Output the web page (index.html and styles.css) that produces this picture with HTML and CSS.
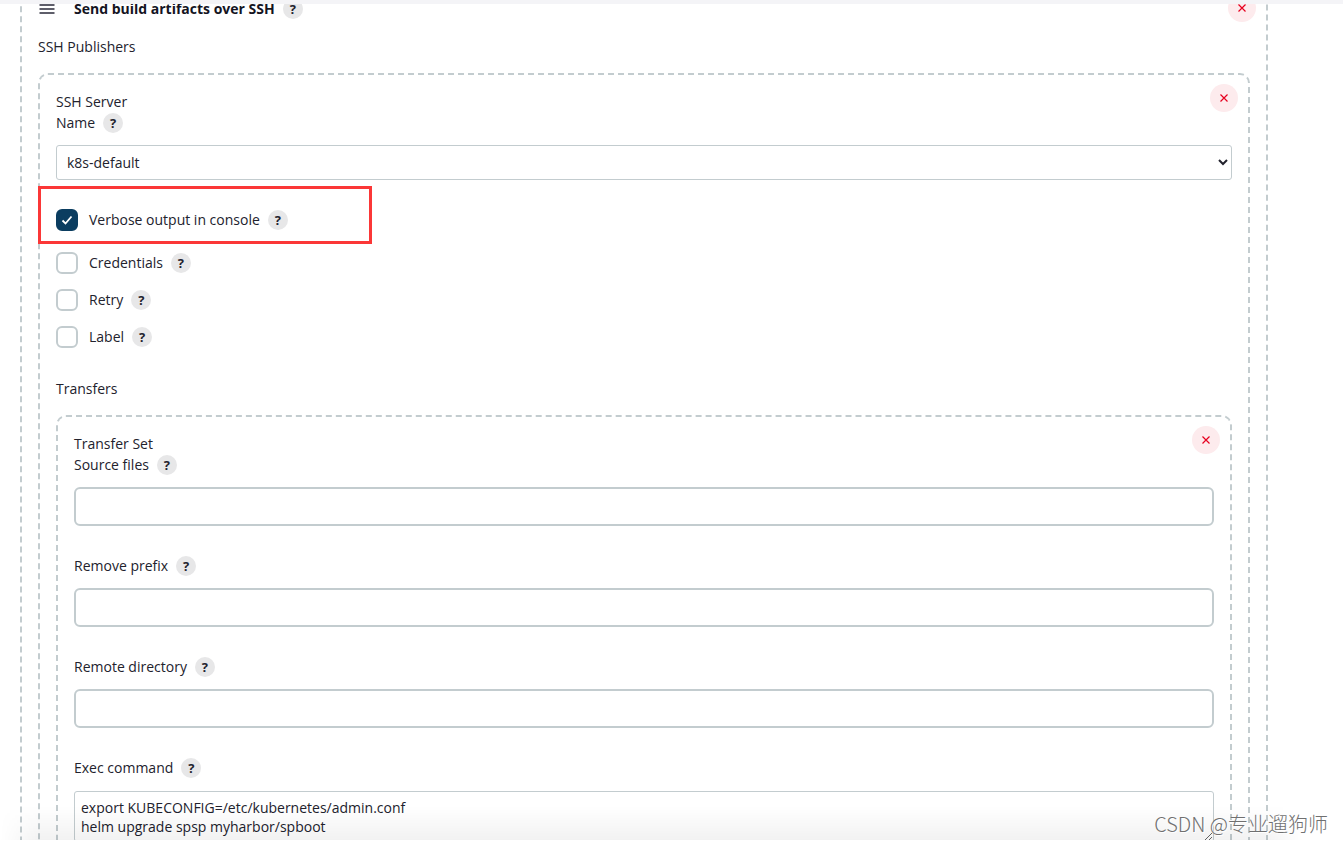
FILE: index.html
```html
<!DOCTYPE html>
<html lang="en">
<head>
<meta charset="utf-8">
<title>Send build artifacts over SSH</title>
<link rel="stylesheet" href="styles.css">
</head>
<body>
<svg class="sprite" aria-hidden="true">
  <symbol id="cross" viewBox="0 0 8 8"><path d="M0.5 0.5L7.5 7.5M7.5 0.5L0.5 7.5" fill="none" stroke="currentColor" stroke-width="1.2"/></symbol>
</svg>
<div class="topbar"></div>
<main class="viewport">
  <section class="chunk chunk-root">
    <header class="chunk-head">
      <div class="drag-title">
        <svg class="grip" viewBox="0 0 16 10" aria-hidden="true"><path d="M0.5 1h15M0.5 5h15M0.5 9h15" stroke="#2a2a3a" stroke-width="1.5"/></svg>
        <h1 class="title">Send build artifacts over SSH</h1>
        <button class="help" type="button" aria-label="Help for Send build artifacts over SSH">?</button>
      </div>
      <button class="close" type="button" aria-label="Remove build step"><svg><use href="#cross"/></svg></button>
    </header>
    <h2 class="section-title publishers">SSH Publishers</h2>
    <section class="chunk">
      <header class="chunk-head">
        <div>
          <h3 class="line">SSH Server</h3>
          <div class="line caption"><label for="server">Name</label><button class="help" type="button" aria-label="Help for Name">?</button></div>
        </div>
        <button class="close" type="button" aria-label="Remove server"><svg><use href="#cross"/></svg></button>
      </header>
      <select class="select" id="server"><option>k8s-default</option></select>
      <div class="options">
        <div class="option option-marked">
          <span class="tick"><input type="checkbox" id="verbose" checked><svg viewBox="0 0 22 22" aria-hidden="true"><path d="M6.5 11.5l3 3 6-7" fill="none" stroke="#fff" stroke-width="1.8"/></svg></span>
          <label for="verbose">Verbose output in console</label><button class="help" type="button" aria-label="Help for Verbose output in console">?</button>
          <span class="marker"></span>
        </div>
        <div class="option">
          <span class="tick"><input type="checkbox" id="cred"></span>
          <label for="cred">Credentials</label><button class="help" type="button" aria-label="Help for Credentials">?</button>
        </div>
        <div class="option">
          <span class="tick"><input type="checkbox" id="retry"></span>
          <label for="retry">Retry</label><button class="help" type="button" aria-label="Help for Retry">?</button>
        </div>
        <div class="option">
          <span class="tick"><input type="checkbox" id="label"></span>
          <label for="label">Label</label><button class="help" type="button" aria-label="Help for Label">?</button>
        </div>
      </div>
      <h3 class="section-title transfers">Transfers</h3>
      <section class="chunk">
        <header class="chunk-head">
          <div>
            <h4 class="line">Transfer Set</h4>
            <div class="line caption"><label for="source">Source files</label><button class="help" type="button" aria-label="Help for Source files">?</button></div>
          </div>
          <button class="close" type="button" aria-label="Remove transfer set"><svg><use href="#cross"/></svg></button>
        </header>
        <input class="text" type="text" id="source">
        <div class="line caption field"><label for="prefix">Remove prefix</label><button class="help" type="button" aria-label="Help for Remove prefix">?</button></div>
        <input class="text" type="text" id="prefix">
        <div class="line caption field"><label for="remote">Remote directory</label><button class="help" type="button" aria-label="Help for Remote directory">?</button></div>
        <input class="text" type="text" id="remote">
        <div class="line caption field"><label for="exec">Exec command</label><button class="help" type="button" aria-label="Help for Exec command">?</button></div>
        <textarea class="command" id="exec" spellcheck="false">export KUBECONFIG=/etc/kubernetes/admin.conf
helm upgrade spsp myharbor/spboot</textarea>
      </section>
    </section>
  </section>
  <div class="fade"></div>
</main>
<div class="watermark">CSDN @专业遛狗师</div>
</body>
</html>
```
FILE: styles.css
```css
* { box-sizing: border-box; }

body {
  margin: 0;
  height: 100vh;
  padding-bottom: 3px;
  display: flex;
  flex-direction: column;
  overflow: hidden;
  position: relative;
  background: #fff;
  color: #22222d;
  font: 14px/21px "Open Sans", "Noto Sans", sans-serif;
}

button, input, select, textarea { font: inherit; color: inherit; margin: 0; }
h1, h2, h3, h4 { margin: 0; font-size: inherit; font-weight: 400; }

.sprite { position: absolute; width: 0; height: 0; }

.topbar { flex: none; height: 4px; background: #f4f4f7; }

.viewport {
  flex: 1;
  min-height: 0;
  overflow: hidden;
  position: relative;
  padding: 0 75px 0 20px;
}

.chunk {
  border: 2px dashed #c3cccf;
  border-radius: 10px;
  padding: 16px;
}
.chunk-root { margin-top: -28px; }

.chunk-head {
  display: flex;
  justify-content: space-between;
  align-items: flex-start;
}

.drag-title { display: flex; align-items: center; height: 29px; }
.grip { width: 16px; height: 10px; margin: 0 19px 0 1px; }
.title { font-weight: 700; color: #14141f; }

.help {
  flex: none;
  width: 20px;
  height: 20px;
  margin-left: 8px;
  padding: 0;
  border: 0;
  border-radius: 50%;
  background: #e7e7e8;
  font-size: 13px;
  font-weight: 700;
  line-height: 20px;
  text-align: center;
}

.close {
  flex: none;
  display: grid;
  place-items: center;
  width: 28px;
  height: 28px;
  margin: -7px -6px 0 0;
  padding: 0;
  border: 0;
  border-radius: 50%;
  background: #fdebed;
  color: #e6001f;
}
.chunk-root > .chunk-head > .close { margin-top: 0; }
.close svg { width: 8px; height: 8px; }

.section-title { margin-bottom: 16px; }
.publishers { margin-top: 13px; }
.transfers { margin-top: 30px; }

.caption { display: flex; align-items: center; }

.select {
  display: block;
  width: 100%;
  height: 35px;
  margin-top: 12px;
  padding: 0 6px;
  border: 1px solid #c3cccf;
  border-radius: 3px;
  background: #fff;
}

.options { display: grid; gap: 15px; margin-top: 29px; line-height: 20px; }
.option { display: flex; align-items: center; height: 22px; }
.option-marked { position: relative; margin-bottom: 6px; }

.tick { display: grid; width: 22px; height: 22px; margin-right: 11px; }
.tick > * { grid-area: 1 / 1; width: 22px; height: 22px; }
.tick svg { pointer-events: none; }
.tick input {
  appearance: none;
  border: 2px solid #c3cccf;
  border-radius: 6px;
  background: #fff;
}
.tick input:checked { border-color: #0b3d60; background: #0b3d60; }

.marker {
  position: absolute;
  left: -18px;
  top: -23px;
  width: 334px;
  height: 58px;
  border: 3px solid #fb3737;
  pointer-events: none;
}

.text {
  display: block;
  width: 100%;
  height: 39px;
  margin-top: 12px;
  padding: 0 8px;
  border: 2px solid #c3cccf;
  border-radius: 6px;
  background: #fff;
}
.field { margin-top: 29px; }

.command {
  display: block;
  width: 100%;
  height: 51px;
  margin-top: 13px;
  padding: 6px;
  border: 1px solid #c3cccf;
  border-radius: 3px;
  background: #fff;
  line-height: 19px;
  resize: vertical;
  overflow: hidden;
}

.fade {
  position: absolute;
  left: 0;
  right: 40px;
  bottom: 0;
  height: 34px;
  background: linear-gradient(rgba(0, 0, 0, 0), rgba(0, 0, 0, 0.05));
  mask-image: linear-gradient(90deg, transparent, #000 40px, #000 calc(100% - 40px), transparent);
  pointer-events: none;
}

.watermark {
  position: absolute;
  right: 15px;
  bottom: 5px;
  font: 300 20px/28px "Noto Sans CJK SC", sans-serif;
  color: #707070;
  text-shadow: 1px 1px 0 #fff;
  pointer-events: none;
}
```
